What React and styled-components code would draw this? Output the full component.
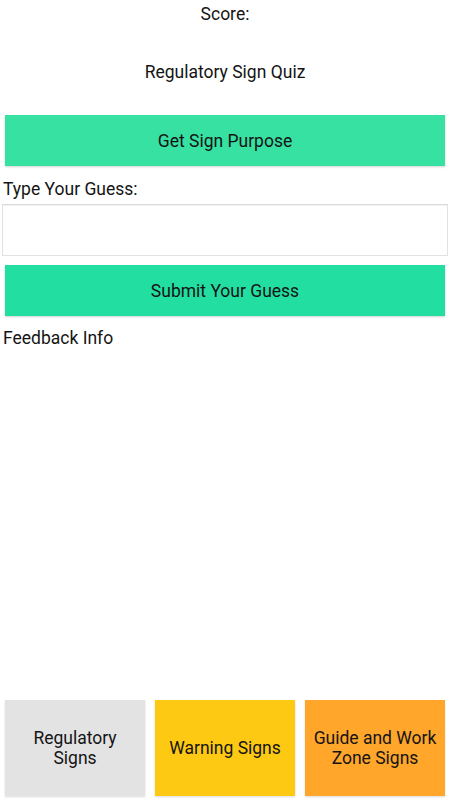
import React from "react";
import styled, { createGlobalStyle } from "styled-components";

const Global = createGlobalStyle`
  html, body { margin: 0; padding: 0; background: #fff; }
  body { font-family: Roboto, "Noto Sans", sans-serif; color: #141414; }
  #root { height: 800px; }
`;

const Page = styled.div`
  height: 800px;
  display: flex;
  flex-direction: column;
  box-sizing: border-box;
  font-size: 17.5px;
  line-height: 20px;
`;

const Score = styled.div`
  text-align: center;
  padding-top: 4px;
  height: 24px;
`;

const Title = styled.div`
  text-align: center;
  margin-top: 34px;
  height: 20px;
`;

const ActionButton = styled.button`
  display: flex;
  align-items: center;
  justify-content: center;
  margin: ${(p) => p.$mt}px 5px 0;
  height: 51px;
  border: none;
  padding: 0;
  background: ${(p) => p.$bg};
  font: inherit;
  color: #141414;
  box-shadow: 0 1px 2px rgba(0, 0, 0, 0.18);
`;

const Label = styled.div`
  margin: ${(p) => p.$mt}px 3px 0;
  height: 20px;
`;

const GuessInput = styled.input`
  margin: 5px 2px 0;
  height: 52px;
  box-sizing: border-box;
  border: 1px solid #e2e2e2;
  border-top-color: #d8d8d8;
  box-shadow: inset 0 1px 1px rgba(0, 0, 0, 0.05);
  outline: none;
  font: inherit;
  padding: 0 8px;
`;

const Spacer = styled.div`
  flex: 1;
`;

const CategoryRow = styled.div`
  display: grid;
  grid-template-columns: repeat(3, 1fr);
  gap: 10px;
  padding: 0 5px;
  margin-bottom: 4px;
`;

const CategoryButton = styled.button`
  height: 96px;
  border: none;
  padding: 0 6px;
  background: ${(p) => p.$bg};
  font: inherit;
  color: #141414;
  text-align: center;
  box-shadow: 0 1px 2px rgba(0, 0, 0, 0.15);
`;

export default function App() {
  return (
    <>
      <Global />
      <Page>
        <Score>Score:</Score>
        <Title>Regulatory Sign Quiz</Title>
        <ActionButton $mt={33} $bg="#36e1a2">Get Sign Purpose</ActionButton>
        <Label $mt={13}>Type Your Guess:</Label>
        <GuessInput type="text" />
        <ActionButton $mt={9} $bg="#23dea1">Submit Your Guess</ActionButton>
        <Label $mt={12}>Feedback Info</Label>
        <Spacer />
        <CategoryRow>
          <CategoryButton $bg="#e3e3e3">Regulatory<br />Signs</CategoryButton>
          <CategoryButton $bg="#fdc913">Warning Signs</CategoryButton>
          <CategoryButton $bg="#ffa62b">Guide and Work<br />Zone Signs</CategoryButton>
        </CategoryRow>
      </Page>
    </>
  );
}
